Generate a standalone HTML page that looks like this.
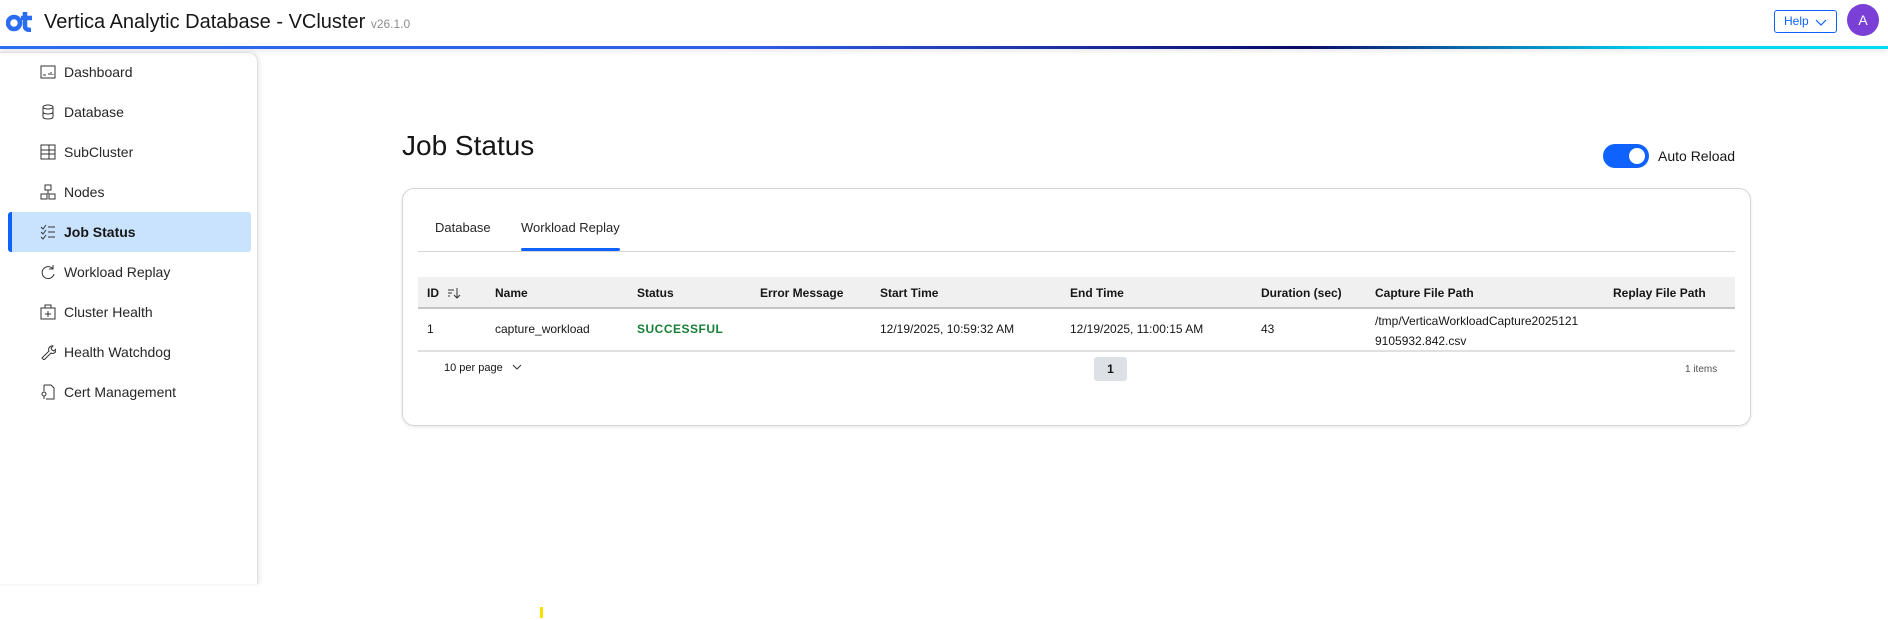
<!DOCTYPE html>
<html><head><meta charset="utf-8"><style>
*{box-sizing:border-box;margin:0;padding:0}
body{width:1888px;height:620px;overflow:hidden;background:#fff;font-family:"Liberation Sans",sans-serif;color:#161616;position:relative}
.hdr{position:absolute;left:0;top:0;width:1888px;height:47px;background:#fff}
.line{position:absolute;left:0;top:46px;width:1888px;height:3px;background:linear-gradient(90deg,#2a6cf2 0%,#2e5ce6 40%,#1a2a9a 58%,#0a0a68 69%,#0a6fb0 78%,#00d8f0 88%,#00dcf2 100%);box-shadow:0 2px 4px rgba(0,0,0,.12)}
.logo{position:absolute;left:6px;top:10px}
.title{position:absolute;left:44px;top:11px;font-size:20px;color:#161616}
.title small{font-size:12px;color:#8d8d8d}
.help{position:absolute;left:1774px;top:10px;width:63px;height:23px;border:1px solid #0f62fe;border-radius:3px;color:#0f62fe;font-size:12px;line-height:21px;padding-left:9px;white-space:nowrap}
.help svg{position:absolute;right:9px;top:8px}
.av{position:absolute;left:1847px;top:4px;width:32px;height:32px;border-radius:50%;background:#7a3fd6;color:#fff;font-size:14px;text-align:center;line-height:32px}
.side{position:absolute;left:-10px;top:52px;width:268px;height:532px;border:1px solid #e0e0e0;border-bottom:none;border-top-right-radius:10px;box-shadow:2px 0 4px rgba(0,0,0,.08);background:#fff}
.it{position:absolute;left:40px;height:40px;font-size:14px;line-height:40px;color:#262626}
.it svg{position:absolute;left:0;top:12px}
.it span{position:absolute;left:24px;white-space:nowrap}
.act{position:absolute;left:8px;top:212px;width:243px;height:40px;background:#c9e2fd;border-radius:3px;border-left:4px solid #0f62fe}
h1{position:absolute;left:402px;top:130px;font-size:28px;font-weight:normal;color:#161616}
.tog{position:absolute;left:1603px;top:144px;width:46px;height:24px;border-radius:12px;background:#0f62fe}
.tog i{position:absolute;right:4px;top:4px;width:16px;height:16px;border-radius:50%;background:#fff}
.ar{position:absolute;left:1658px;top:148px;font-size:14px}
.card{position:absolute;left:402px;top:188px;width:1349px;height:238px;border:1px solid #d6d6d6;border-radius:12px;box-shadow:0 1px 3px rgba(0,0,0,.1)}
.tab{position:absolute;top:220px;font-size:13px;color:#262626}
.ul{position:absolute;left:521px;top:248px;width:99px;height:3px;background:#0f62fe;border-radius:2px}
.div{position:absolute;left:418px;top:251px;width:1317px;height:1px;background:#d6d6d6}
.th{position:absolute;left:418px;top:277px;width:1317px;height:32px;background:#f0f0f0;border-bottom:2px solid #c4c4c4}
.c{position:absolute;font-size:12px;white-space:nowrap}
.b{font-weight:bold}
.rb{position:absolute;left:418px;top:350px;width:1317px;height:2px;background:#e0e0e0}
.pg{position:absolute;left:1094px;top:357px;width:33px;height:24px;background:#dde1e6;border-radius:3px;font-size:12px;font-weight:bold;text-align:center;line-height:24px}
</style></head><body>
<div class="hdr"></div>
<svg class="logo" width="28" height="22" viewBox="0 0 28 22"><circle cx="8" cy="13" r="6" fill="none" stroke="#2a6cf2" stroke-width="4.5"/><path d="M19 2v14c0 3 2 4 6 4M15 8h11" fill="none" stroke="#2a6cf2" stroke-width="4.5"/></svg>
<div class="title">Vertica Analytic Database - VCluster <small>v26.1.0</small></div>
<div class="help">Help<svg width="12" height="7" viewBox="0 0 12 7"><path d="M1 1l5 5 5-5" fill="none" stroke="#0f62fe" stroke-width="1.2"/></svg></div>
<div class="av">A</div>
<div class="line"></div>
<div class="side"></div>
<div class="act"></div>
<div class="it" style="top:52px"><svg width="16" height="16"><rect x="1" y="2" width="14" height="12" fill="none" stroke="#333"/><path d="M3 11h3M9 11v-2M11 11v-3M13 11v-1" stroke="#333"/></svg><span>Dashboard</span></div>
<div class="it" style="top:92px"><svg width="16" height="16"><ellipse cx="8" cy="3" rx="5" ry="2" fill="none" stroke="#333"/><path d="M3 3v10c0 2.6 10 2.6 10 0V3M3 8c0 2.6 10 2.6 10 0" fill="none" stroke="#333"/></svg><span>Database</span></div>
<div class="it" style="top:132px"><svg width="16" height="16"><rect x="1" y="1" width="14" height="14" fill="none" stroke="#333"/><path d="M1 6h14M1 10h14M9 1v14" stroke="#333"/></svg><span>SubCluster</span></div>
<div class="it" style="top:172px"><svg width="16" height="16"><rect x="5" y="1" width="6" height="5" fill="none" stroke="#333"/><rect x="1" y="10" width="6" height="5" fill="none" stroke="#333"/><rect x="9" y="10" width="6" height="5" fill="none" stroke="#333"/><path d="M8 6v4" stroke="#333"/></svg><span>Nodes</span></div>
<div class="it" style="top:212px;font-weight:bold;color:#161616"><svg width="16" height="16"><path d="M1 3l2 2 3-4M1 8l2 2 3-4M1 13l2 2 3-4M8 3h7M8 8h7M8 13h7" fill="none" stroke="#333"/></svg><span>Job Status</span></div>
<div class="it" style="top:252px"><svg width="16" height="16"><path d="M13 5A6 6 0 1 0 14 10M13 1v4h-4" fill="none" stroke="#333"/></svg><span>Workload Replay</span></div>
<div class="it" style="top:292px"><svg width="16" height="16"><rect x="1" y="4" width="14" height="11" fill="none" stroke="#333"/><path d="M5 4V1h6v3M8 7v6M5 10h6" fill="none" stroke="#333"/></svg><span>Cluster Health</span></div>
<div class="it" style="top:332px"><svg width="16" height="16"><path d="M2 14l7-7a3.5 3.5 0 0 1 4-5l-2 2 1 2 2 1 2-2a3.5 3.5 0 0 1-5 4l-7 7z" fill="none" stroke="#333"/></svg><span>Health Watchdog</span></div>
<div class="it" style="top:372px"><svg width="16" height="16"><path d="M4 1h7l3 3v11H6M4 1v6" fill="none" stroke="#333"/><circle cx="4" cy="10" r="2" fill="none" stroke="#333"/><path d="M4 12v3" stroke="#333"/></svg><span>Cert Management</span></div>
<h1>Job Status</h1>
<div class="tog"><i></i></div>
<div class="ar">Auto Reload</div>
<div class="card"></div>
<div class="tab" style="left:435px">Database</div>
<div class="tab" style="left:521px">Workload Replay</div>
<div class="ul"></div>
<div class="div"></div>
<div class="th"></div>
<div class="c b" style="left:427px;top:286px">ID</div>
<svg style="position:absolute;left:447px;top:287px" width="14" height="12"><path d="M1 3h6M1 6h4M1 9h2M10 1v10M7 8l3 3 3-3" fill="none" stroke="#333"/></svg>
<div class="c b" style="left:495px;top:286px">Name</div>
<div class="c b" style="left:637px;top:286px">Status</div>
<div class="c b" style="left:760px;top:286px">Error Message</div>
<div class="c b" style="left:880px;top:286px">Start Time</div>
<div class="c b" style="left:1070px;top:286px">End Time</div>
<div class="c b" style="left:1261px;top:286px">Duration (sec)</div>
<div class="c b" style="left:1375px;top:286px">Capture File Path</div>
<div class="c b" style="left:1613px;top:286px">Replay File Path</div>
<div class="c" style="left:427px;top:322px">1</div>
<div class="c" style="left:495px;top:322px">capture_workload</div>
<div class="c b" style="left:637px;top:322px;color:#198038;letter-spacing:.5px">SUCCESSFUL</div>
<div class="c" style="left:880px;top:322px">12/19/2025, 10:59:32 AM</div>
<div class="c" style="left:1070px;top:322px">12/19/2025, 11:00:15 AM</div>
<div class="c" style="left:1261px;top:322px">43</div>
<div class="c" style="left:1375px;top:311px;line-height:20px">/tmp/VerticaWorkloadCapture2025121<br>9105932.842.csv</div>
<div class="rb"></div>
<div class="c" style="left:444px;top:362px;font-size:11px">10 per page <svg width="10" height="7" style="margin-left:6px" viewBox="0 0 10 7"><path d="M1 1l4 4 4-4" fill="none" stroke="#333"/></svg></div>
<div class="pg">1</div>
<div class="c" style="left:1685px;top:364px;font-size:10px;color:#525252">1 items</div>
<div style="position:absolute;left:540px;top:607px;width:3px;height:11px;background:#f5e000"></div>
</body></html>
